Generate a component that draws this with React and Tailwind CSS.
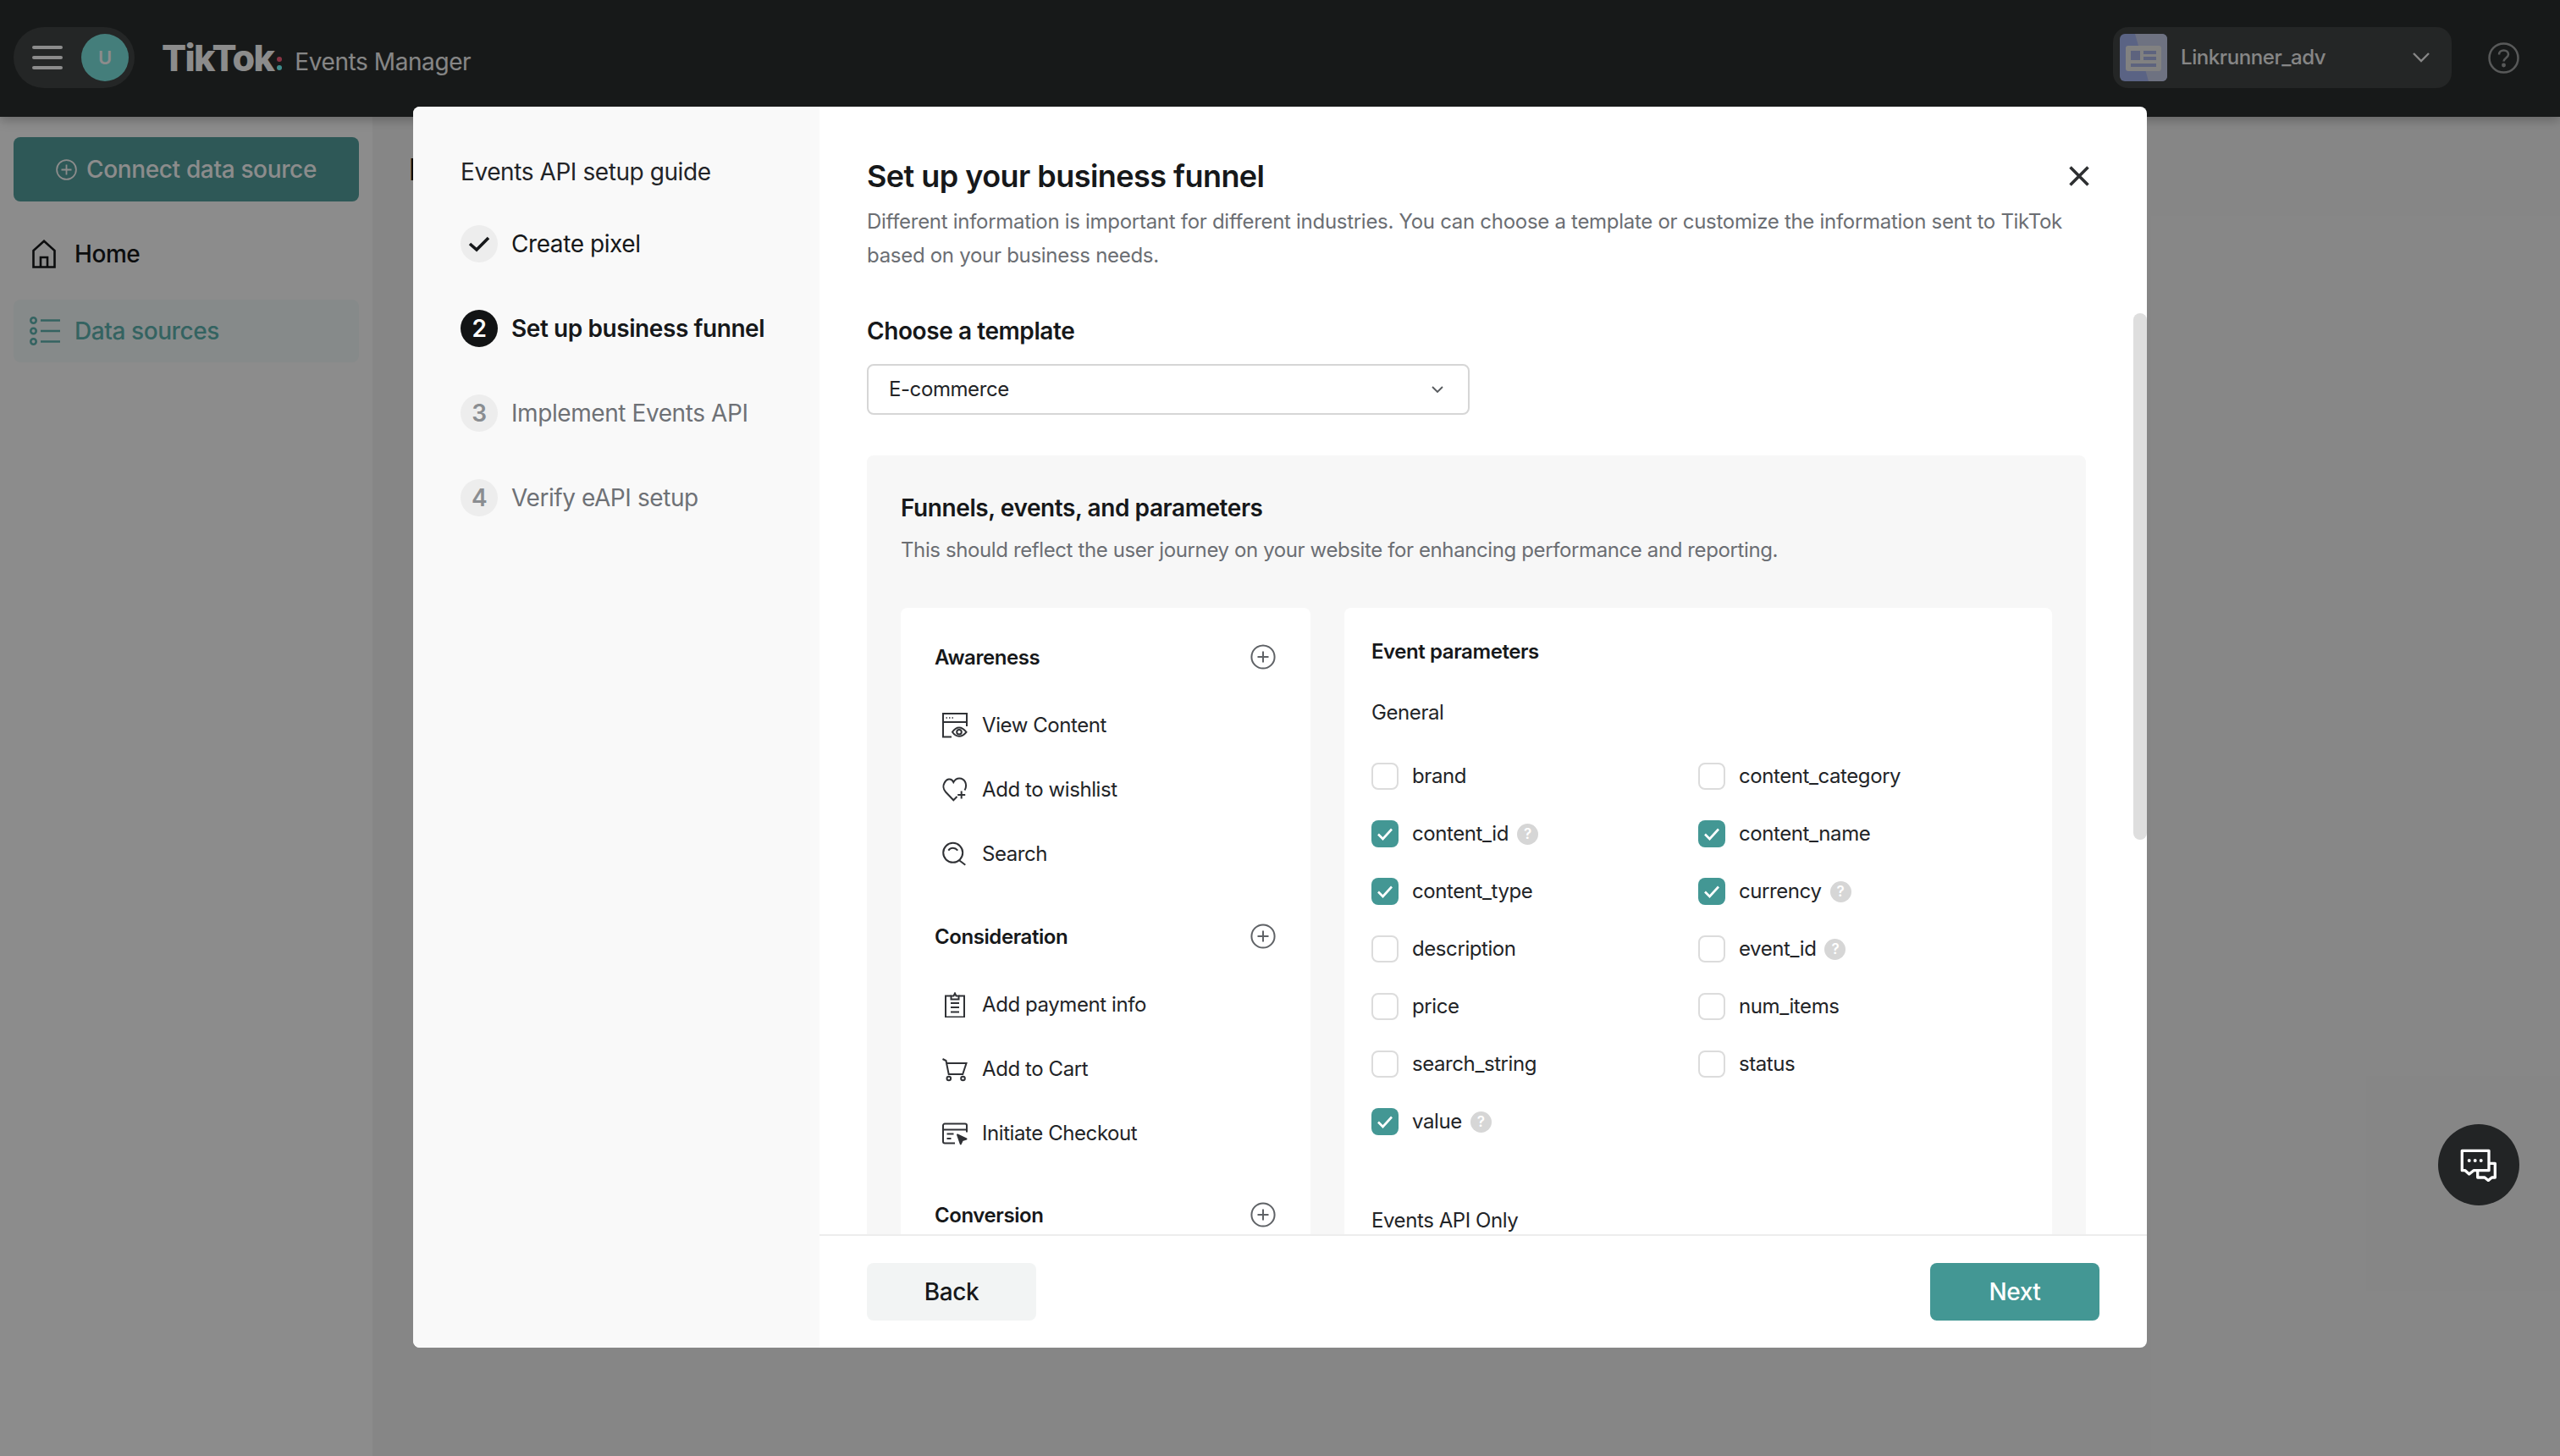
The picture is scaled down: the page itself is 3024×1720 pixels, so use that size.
import React from "react";

const font = { fontFamily: "Inter, 'Liberation Sans', sans-serif" };

function Plus() {
  return (
    <svg width="30" height="30" viewBox="0 0 30 30" fill="none" stroke="#5f6266" strokeWidth="2" className="-translate-y-px">
      <circle cx="15" cy="15" r="13.6" />
      <path d="M15 8.5v13M8.5 15h13" />
    </svg>
  );
}

const ic = { width: 30, height: 30, viewBox: "0 0 30 30", fill: "none", stroke: "#303236", strokeWidth: 2 };

const icons = {
  view: (
    <svg {...ic}>
      <path d="M11 28.5H1V1h28v15" />
      <path d="M1 11h28" />
      <path d="M4.5 6h1.5M8 6h1.5M11.5 6H13" strokeWidth="1.6" />
      <path d="M12 22.8c2.4-3.6 5-5.3 8-5.3s5.6 1.7 8.5 5.3c-2.9 3.5-5.5 5-8.5 5s-5.6-1.5-8-5z" />
      <circle cx="20" cy="22.8" r="2.8" />
    </svg>
  ),
  heart: (
    <svg {...ic}>
      <path d="M17.5 23l-4.2 4.2L4 17.5C1 14.5 1 10 2.5 7c2-4.5 8-7 10.8-1 3.2-6 10.7-6 13.7-.5 1.8 3.5 1.5 6.5-.5 10" />
      <path d="M22.7 16.5v9M18.2 21h9" />
    </svg>
  ),
  search: (
    <svg {...ic}>
      <circle cx="12.7" cy="13.3" r="11.5" />
      <path d="M7.3 10.7c1.3-1.8 3.1-2.9 5.4-2.9s4.1 1.1 5.6 2.9" />
      <path d="m20 22.3 7.3 5.5" />
    </svg>
  ),
  clip: (
    <svg {...ic}>
      <path d="M10.5 4.5H4v25h22v-25h-6.5" />
      <path d="M10.5 8.5V4.5h3l1.5-3 1.5 3h3v4z" />
      <path d="M10 13h10M10 18h10M10 23.5h10" />
    </svg>
  ),
  cart: (
    <svg {...ic}>
      <path d="M0.5 3l4 2 3.2 16h16.5l4.3-13H5.2" />
      <circle cx="7.8" cy="26" r="2.3" />
      <circle cx="24.5" cy="26" r="2.3" />
    </svg>
  ),
  checkout: (
    <svg {...ic}>
      <path d="M15 26.5H3a2 2 0 0 1-2-2V5.5a2 2 0 0 1 2-2h24a2 2 0 0 1 2 2v8" />
      <path d="M1 10.5h28" />
      <path d="M5.5 15.5h8M5.5 21h5" />
      <path d="M18 16.5l10.5 5-4.7 1.6-2 4.3z" fill="#303236" strokeLinejoin="round" />
    </svg>
  ),
};

function Help() {
  return (
    <span className="flex h-[25px] w-[25px] items-center justify-center rounded-full bg-[#d6d6d6] text-[17px] font-semibold leading-none text-white">
      ?
    </span>
  );
}

function Param({ name, checked, help }) {
  return (
    <div className="flex items-center">
      {checked ? (
        <span className="flex h-[32px] w-[32px] items-center justify-center rounded-[8px] bg-[#439794]">
          <svg width="22" height="22" viewBox="0 0 22 22" fill="none" stroke="#fff" strokeWidth="2.6">
            <path d="m3 11.5 5.5 5.5L19 5.5" />
          </svg>
        </span>
      ) : (
        <span className="h-[32px] w-[32px] rounded-[8px] border-2 border-[#dcdcdc] bg-white" />
      )}
      <span className="ml-[16px] text-[24px] leading-[32px] text-[#222427]">{name}</span>
      {help && (
        <span className="ml-[10px]">
          <Help />
        </span>
      )}
    </div>
  );
}

function Funnel({ title, items, last }) {
  return (
    <div className={last ? "" : "mb-[39.5px]"}>
      <div className="flex h-[40px] items-center justify-between">
        <span className="text-[24px] font-semibold text-[#16181a]">{title}</span>
        <Plus />
      </div>
      {items && (
        <div className="mt-[22px]">
          {items.map(([icon, label]) => (
            <div key={label} className="flex h-[76px] items-center pl-[9px]">
              <span className="flex h-[30px] w-[30px] items-center justify-center">{icons[icon]}</span>
              <span className="ml-[17px] text-[24px] text-[#222427]">{label}</span>
            </div>
          ))}
        </div>
      )}
    </div>
  );
}

function Step({ mark, label, tone }) {
  const circle =
    tone === "active"
      ? "bg-[#121415] text-white"
      : tone === "done"
        ? "bg-[#ededed] text-[#16181a]"
        : "bg-[#ededed] text-[#8a8d91]";
  const text =
    tone === "active"
      ? "font-semibold text-[#16181a]"
      : tone === "done"
        ? "text-[#16181a]"
        : "text-[#6e7176]";
  return (
    <div className="flex h-[44px] items-center">
      <span className={`flex h-[44px] w-[44px] items-center justify-center rounded-full text-[28px] font-semibold ${circle}`}>
        {mark}
      </span>
      <span className={`ml-[16px] text-[28px] ${text}`}>{label}</span>
    </div>
  );
}

export default function App() {
  return (
    <div style={font} className="relative flex h-[1720px] w-[3024px] flex-col overflow-hidden bg-[#f5f5f5] tracking-[-0.42px]">
      <header className="z-10 flex h-[138px] shrink-0 items-start justify-between bg-[#2b2f2f] shadow-[0_4px_12px_rgba(0,0,0,0.25)]">
        <div className="flex items-center pl-[16px] pt-[32px]">
          <div className="flex h-[72px] w-[143px] items-center rounded-full bg-[#434545] pl-[22px]">
            <svg width="36" height="28" viewBox="0 0 36 28" fill="#fff">
              <rect y="0" width="36" height="4" rx="2" />
              <rect y="12" width="36" height="4" rx="2" />
              <rect y="24" width="36" height="4" rx="2" />
            </svg>
            <span className="ml-[22px] flex h-[56px] w-[56px] items-center justify-center rounded-full bg-[#7ce5e0] text-[22px] font-semibold text-white">
              U
            </span>
          </div>
          <div className="ml-[32px] flex items-center">
            <span className="text-[43px] font-extrabold leading-none tracking-[-1.65px] text-white">TikTok</span>
            <span className="ml-[4px] mt-[13px] flex flex-col gap-[4px]">
              <span className="h-[6px] w-[6px] rounded-full bg-[#fb607d]" />
              <span className="h-[6px] w-[6px] rounded-full bg-[#72ffff]" />
            </span>
            <span className="ml-[15px] mt-[10px] text-[28px] text-[#f4f4f4]">Events Manager</span>
          </div>
        </div>
        <div className="flex items-center pr-[48px] pt-[32px]">
          <div className="flex h-[72px] w-[400px] items-center rounded-[18px] bg-[#434545] pl-[8px]">
            <svg width="56" height="56" viewBox="0 0 56 56" className="rounded-[6px]">
              <rect width="56" height="56" fill="#a4b4f0" />
              <path d="M18 0h38v56H34z" fill="#c9cfec" />
              <rect x="7" y="14" width="42" height="30" rx="3" fill="#ececec" />
              <rect x="13" y="20" width="11" height="11" fill="#a9b4e6" />
              <rect x="28" y="20" width="15" height="4" fill="#a9b4e6" />
              <rect x="28" y="27" width="15" height="4" fill="#a9b4e6" />
              <rect x="13" y="35" width="30" height="4" fill="#a9b4e6" />
            </svg>
            <span className="ml-[16px] text-[24px] font-medium text-[#f4f4f4]">Linkrunner_adv</span>
            <svg className="ml-[103px]" width="20" height="12" viewBox="0 0 20 12" fill="none" stroke="#f4f4f4" strokeWidth="2.4">
              <path d="m1 1 9 9 9-9" />
            </svg>
          </div>
          <svg className="ml-[43px]" width="37" height="37" viewBox="0 0 37 37" fill="none" stroke="#a0a2a2" strokeWidth="2.5">
            <circle cx="18.5" cy="18.5" r="17" />
            <path d="M13 14.5c0-3.2 2.5-5 5.5-5s5.5 1.9 5.5 4.8c0 4-5.5 4.2-5.5 8.2" />
            <circle cx="18.5" cy="27" r="1.2" fill="#a0a2a2" />
          </svg>
        </div>
      </header>

      <div className="flex flex-1">
        <aside className="w-[440px] shrink-0 bg-white px-[16px] pt-[24px]">
          <div className="flex h-[76px] items-center justify-center gap-[11px] rounded-[8px] bg-[#54a09e] text-[28px] font-medium tracking-[-0.35px] text-white">
            <svg width="25" height="25" viewBox="0 0 25 25" fill="none" stroke="#fff" strokeWidth="1.8">
              <circle cx="12.5" cy="12.5" r="11.4" />
              <path d="M12.5 6.5v12M6.5 12.5h12" />
            </svg>
            Connect data source
          </div>
          <div className="mt-[24px] flex h-[76px] items-center pl-[22px]">
            <svg width="28" height="34" viewBox="0 0 28 34" fill="none" stroke="#16181a" strokeWidth="2.6">
              <path d="M1.5 32.5V13L14 1.8 26.5 13v19.5z" />
              <path d="M10 32.5V21h8v11.5" />
            </svg>
            <span className="ml-[22px] text-[28px] font-medium text-[#16181a]">Home</span>
          </div>
          <div className="mt-[16px] flex h-[74px] items-center rounded-[8px] bg-[#f4fbfb] pl-[19px]">
            <svg width="36" height="34" viewBox="0 0 36 34" fill="none" stroke="#60b5b1" strokeWidth="2.6">
              <circle cx="4.5" cy="4.5" r="3.2" />
              <circle cx="4.5" cy="17" r="3.2" />
              <circle cx="4.5" cy="29.5" r="3.2" />
              <path d="M13 4.5h23M13 17h23M13 29.5h23" />
            </svg>
            <span className="ml-[17px] text-[28px] font-medium text-[#60b5b1]">Data sources</span>
          </div>
        </aside>
        <main className="flex-1 pl-[43px] pt-[40px]">
          <h1 className="text-[36px] font-semibold leading-[44px] text-[#16181a]">D</h1>
        </main>
      </div>

      <div className="absolute inset-0 z-20 bg-black/45" />

      <div className="absolute left-[488px] top-[126px] z-30 flex h-[1466px] w-[2048px] overflow-hidden rounded-[8px] bg-white">
        <nav className="w-[480px] shrink-0 bg-[#f9f9f9] pl-[56px] pt-[57px]">
          <div className="text-[28px] leading-[40px] text-[#222427]">Events API setup guide</div>
          <div className="mt-[43px] flex flex-col gap-[56px]">
            <Step
              tone="done"
              label="Create pixel"
              mark={
                <svg width="26" height="20" viewBox="0 0 26 20" fill="none" stroke="#16181a" strokeWidth="3.6">
                  <path d="m2 10 8 7L24 3" />
                </svg>
              }
            />
            <Step tone="active" mark="2" label="Set up business funnel" />
            <Step tone="todo" mark="3" label="Implement Events API" />
            <Step tone="todo" mark="4" label="Verify eAPI setup" />
          </div>
        </nav>

        <section className="relative flex min-w-0 flex-1 flex-col">
          <div className="h-[1332px] overflow-hidden pl-[56px] pr-[72px] pt-[58px]">
            <h2 className="text-[36px] font-semibold leading-[48px] tracking-[-0.55px] text-[#16181a]">Set up your business funnel</h2>
            <p className="mt-[10px] w-[1440px] text-[24px] leading-[40px] tracking-[-0.29px] text-[#6b6e73]">
              Different information is important for different industries. You can choose a template or customize the information sent to TikTok based on your business needs.
            </p>
            <div className="mt-[49px] text-[28px] font-semibold leading-[40px] text-[#16181a]">Choose a template</div>
            <div className="mt-[19px] flex h-[60px] w-[712px] items-center justify-between rounded-[8px] border-2 border-[#d6d6d6] pl-[24px] pr-[29px] text-[24px] text-[#222427]">
              E-commerce
              <svg width="14" height="9" viewBox="0 0 14 9" fill="none" stroke="#55585c" strokeWidth="1.8">
                <path d="m1 1 6 6 6-6" />
              </svg>
            </div>
            <div className="mt-[48px] rounded-[8px] bg-[#f7f7f7] px-[40px] pt-[42px]">
              <div className="text-[28px] font-semibold leading-[40px] text-[#16181a]">Funnels, events, and parameters</div>
              <div className="mt-[10px] text-[24px] leading-[40px] tracking-[-0.39px] text-[#6b6e73]">
                This should reflect the user journey on your website for enhancing performance and reporting.
              </div>
              <div className="mt-[48px] flex gap-[40px]">
                <div className="h-[900px] w-[484px] shrink-0 rounded-[8px] bg-white pl-[40px] pr-[41px] pt-[39px]">
                  <Funnel
                    title="Awareness"
                    items={[
                      ["view", "View Content"],
                      ["heart", "Add to wishlist"],
                      ["search", "Search"],
                    ]}
                  />
                  <Funnel
                    title="Consideration"
                    items={[
                      ["clip", "Add payment info"],
                      ["cart", "Add to Cart"],
                      ["checkout", "Initiate Checkout"],
                    ]}
                  />
                  <Funnel title="Conversion" last />
                </div>
                <div className="h-[900px] flex-1 rounded-[8px] bg-white pl-[32px] pt-[35px]">
                  <div className="text-[24px] font-semibold leading-[34px] text-[#16181a]">Event parameters</div>
                  <div className="mt-[38px] text-[24px] leading-[34px] text-[#222427]">General</div>
                  <div className="mt-[24px] grid grid-cols-[386px_1fr] auto-rows-[68px] items-center">
                    <Param name="brand" />
                    <Param name="content_category" />
                    <Param name="content_id" checked help />
                    <Param name="content_name" checked />
                    <Param name="content_type" checked />
                    <Param name="currency" checked help />
                    <Param name="description" />
                    <Param name="event_id" help />
                    <Param name="price" />
                    <Param name="num_items" />
                    <Param name="search_string" />
                    <Param name="status" />
                    <Param name="value" checked help />
                  </div>
                  <div className="mt-[66px] text-[24px] leading-[34px] text-[#222427]">Events API Only</div>
                </div>
              </div>
            </div>
          </div>

          <div className="flex flex-1 items-center justify-between border-t-2 border-[#ededed] px-[56px]">
            <button className="flex h-[68px] w-[200px] items-center justify-center rounded-[8px] bg-[#f2f4f4] text-[28px] font-medium text-[#16181a]">
              Back
            </button>
            <button className="flex h-[68px] w-[200px] items-center justify-center rounded-[8px] bg-[#439794] text-[28px] font-medium text-white">
              Next
            </button>
          </div>

          <button className="absolute left-[1476px] top-[70px] flex h-[24px] w-[24px] items-center justify-center">
            <svg width="24" height="24" viewBox="0 0 24 24" fill="none" stroke="#2d2f31" strokeWidth="3.6">
              <path d="m1.5 1.5 21 21M22.5 1.5l-21 21" />
            </svg>
          </button>
          <div className="absolute right-0 top-[244px] h-[622px] w-[16px] rounded-full bg-[#dedede]" />
        </section>
      </div>

      <div className="absolute left-[2880px] top-[1328px] z-40 flex h-[96px] w-[96px] items-center justify-center rounded-full bg-[#222425]">
        <svg width="46" height="40" viewBox="0 0 46 40" fill="none" stroke="#fff" strokeWidth="3.3">
          <path d="M3.3 3.3H35V26.7H17L11.7 31 7 26.7H3.3z" strokeLinejoin="round" />
          <path d="M36 18.3h6.3V35h-3.8l-4.2 3.5L30 35h-8.3v-7" strokeLinejoin="round" />
          <circle cx="11.7" cy="15" r="2" fill="#fff" stroke="none" />
          <circle cx="18.7" cy="15" r="2" fill="#fff" stroke="none" />
          <circle cx="25.7" cy="15" r="2" fill="#fff" stroke="none" />
        </svg>
      </div>
    </div>
  );
}
